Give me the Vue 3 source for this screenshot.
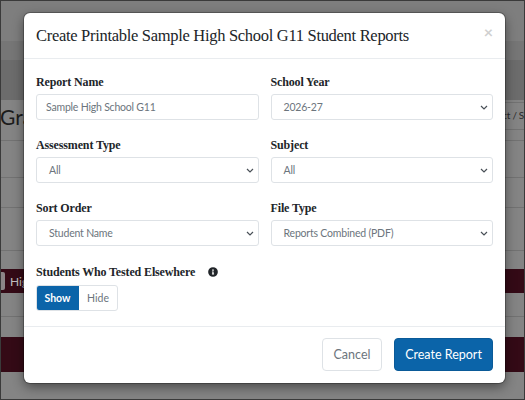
<script setup>
const fields = [
  { label: 'Report Name', value: 'Sample High School G11', input: true },
  { label: 'School Year', value: '2026-27' },
  { label: 'Assessment Type', value: 'All' },
  { label: 'Subject', value: 'All' },
  { label: 'Sort Order', value: 'Student Name' },
  { label: 'File Type', value: 'Reports Combined (PDF)' }
]
</script>

<template>
  <div class="page">
    <div class="backdrop">
      <div class="band band-top"></div>
      <div class="band band-mid"></div>
      <div class="band band-low"></div>
      <div class="band band-title">
        <span class="heading">Gra</span>
        <div class="crumb"><span>ct / S</span></div>
      </div>
      <div class="band row-37"></div>
      <div class="band row-30"></div>
      <div class="band row-43"></div>
      <div class="band row-18"></div>
      <div class="band maroon-chip"><i></i><span>Hig</span></div>
      <div class="band row-24"></div>
      <div class="band row-20"></div>
      <div class="band maroon"></div>
    </div>

    <div class="modal">
      <header class="modal-head">
        <h1>Create Printable Sample High School G11 Student Reports</h1>
        <span class="close">×</span>
      </header>

      <div class="modal-body">
        <div class="grid">
          <div v-for="f in fields" :key="f.label" class="field">
            <label>{{ f.label }}</label>
            <div class="control" :class="{ text: f.input }">
              <span>{{ f.value }}</span>
              <svg v-if="!f.input" width="8" height="5" viewBox="0 0 8 5" fill="none">
                <path d="M1 1l3 3 3-3" stroke="#495057" stroke-width="1.2" />
              </svg>
            </div>
          </div>
        </div>

        <div class="tested">
          <label>Students Who Tested Elsewhere</label>
          <svg class="info" width="10" height="10" viewBox="0 0 512 512">
            <path fill="#212529" d="M256 8a248 248 0 1 0 0 496 248 248 0 0 0 0-496zm0 110a42 42 0 1 1 0 84 42 42 0 0 1 0-84zm56 254c0 7-5 12-12 12h-88c-7 0-12-5-12-12v-24c0-7 5-12 12-12h12v-64h-12c-7 0-12-5-12-12v-24c0-7 5-12 12-12h64c7 0 12 5 12 12v100h12c7 0 12 5 12 12z" />
          </svg>
        </div>
        <div class="toggle">
          <span class="on">Show</span>
          <span>Hide</span>
        </div>
      </div>

      <footer class="modal-foot">
        <button class="btn cancel">Cancel</button>
        <button class="btn primary">Create Report</button>
      </footer>
    </div>
  </div>
</template>

<style>
html, body {
  margin: 0;
}
</style>

<style scoped>
.page {
  position: relative;
  width: 525px;
  height: 400px;
  box-sizing: border-box;
  border: 1px solid #3a3a3a;
  overflow: hidden;
  background: #848484;
  font-family: Lato, sans-serif;
}

.band {
  box-sizing: border-box;
  border-bottom: 1px solid #727272;
}

.band-top {
  height: 40px;
  border-bottom: 0;
  background: #7e7e7e;
}

.band-mid {
  height: 19px;
  border-bottom: 0;
  background: #767676;
}

.band-low {
  height: 40px;
  border-bottom: 0;
  background: #6c6c6c;
}

.band-title {
  height: 41px;
  display: flex;
  justify-content: space-between;
  background: #848484;
}

.heading {
  font-size: 21px;
  line-height: 33px;
  margin-left: -1px;
  color: #1c1c1c;
}

.crumb {
  width: 110px;
  height: 28px;
  margin-top: 2px;
  box-sizing: border-box;
  border-top: 1px solid #727272;
  border-bottom: 1px solid #727272;
  text-align: right;
  font-size: 10px;
  letter-spacing: -0.3px;
  line-height: 25px;
  color: #2a2a2a;
  white-space: nowrap;
}

.row-37 {
  height: 37px;
}

.row-30 {
  height: 30px;
}

.row-43 {
  height: 43px;
}

.row-18 {
  height: 18px;
  border-bottom: 0;
}

.maroon-chip {
  height: 24px;
  border-bottom: 0;
  background: #340a16;
  display: flex;
  align-items: center;
  gap: 5px;
  font-size: 12px;
  color: #c4c0c1;
}

.maroon-chip i {
  width: 4px;
  height: 18px;
  background: #8c8688;
  border-radius: 0 2px 2px 0;
}

.row-24 {
  height: 24px;
}

.row-20 {
  height: 20px;
  border-bottom: 0;
}

.maroon {
  height: 35px;
  border-bottom: 0;
  background: #340a16;
}

.modal {
  position: absolute;
  left: 23px;
  top: 12px;
  width: 481px;
  height: 370px;
  background: #fff;
  border-radius: 6px;
  box-shadow: 0 0 0 1px rgba(0, 0, 0, 0.25), 0 4px 12px rgba(0, 0, 0, 0.45);
  display: flex;
  flex-direction: column;
}

.modal-head {
  height: 46px;
  box-sizing: border-box;
  border-bottom: 1px solid #e9ecef;
  padding: 0 12px;
  position: relative;
  display: flex;
  align-items: center;
}

h1 {
  margin: 0;
  font-family: "Liberation Serif", serif;
  font-size: 16.5px;
  letter-spacing: -0.3px;
  font-weight: 400;
  color: #212529;
}

.close {
  position: absolute;
  right: 12px;
  top: 10px;
  font-size: 16px;
  line-height: 18px;
  font-weight: 700;
  color: #d0d0d0;
}

.modal-body {
  flex: 1;
  padding: 15px 12px 0;
  box-sizing: border-box;
}

.grid {
  display: grid;
  grid-template-columns: 1fr 1fr;
  column-gap: 12px;
  row-gap: 17px;
}

label {
  display: block;
  font-family: "Liberation Serif", serif;
  font-size: 12px;
  letter-spacing: -0.14px;
  line-height: 15px;
  padding-top: 1px;
  font-weight: 700;
  color: #212529;
  margin-bottom: 4px;
}

.control {
  height: 26px;
  box-sizing: border-box;
  border: 1px solid #dee2e6;
  border-radius: 3px;
  padding: 0 4px 0 12px;
  display: flex;
  align-items: center;
  justify-content: space-between;
  font-size: 10.5px;
  letter-spacing: -0.2px;
  color: #6c757d;
}

.control.text {
  padding-left: 9px;
}

.tested {
  display: flex;
  align-items: center;
  margin-top: 18px;
  gap: 13px;
}

.tested label {
  margin-bottom: 0;
}

.toggle {
  display: inline-flex;
  margin-top: 5px;
  height: 26px;
  box-sizing: border-box;
  border: 1px solid #dee2e6;
  border-radius: 3px;
  font-size: 10.5px;
  color: #6c757d;
  overflow: hidden;
}

.toggle span {
  width: 38px;
  display: flex;
  align-items: center;
  justify-content: center;
}

.toggle .on {
  width: 43px;
  margin: -1px 0 -1px -1px;
  background: #0b64a9;
  color: #fff;
  font-weight: 700;
}

.modal-foot {
  height: 57px;
  box-sizing: border-box;
  border-top: 1px solid #e9ecef;
  padding: 11px 12px 0;
  display: flex;
  justify-content: flex-end;
  gap: 12px;
}

.btn {
  height: 33px;
  box-sizing: border-box;
  border-radius: 4px;
  font-family: Lato, sans-serif;
  font-size: 12.5px;
  padding: 0;
}

.cancel {
  width: 60px;
  background: #fff;
  border: 1px solid #dee2e6;
  color: #6c757d;
}

.primary {
  width: 99px;
  background: #0b64a9;
  border: 1px solid #0a5a98;
  color: #fff;
}
</style>
